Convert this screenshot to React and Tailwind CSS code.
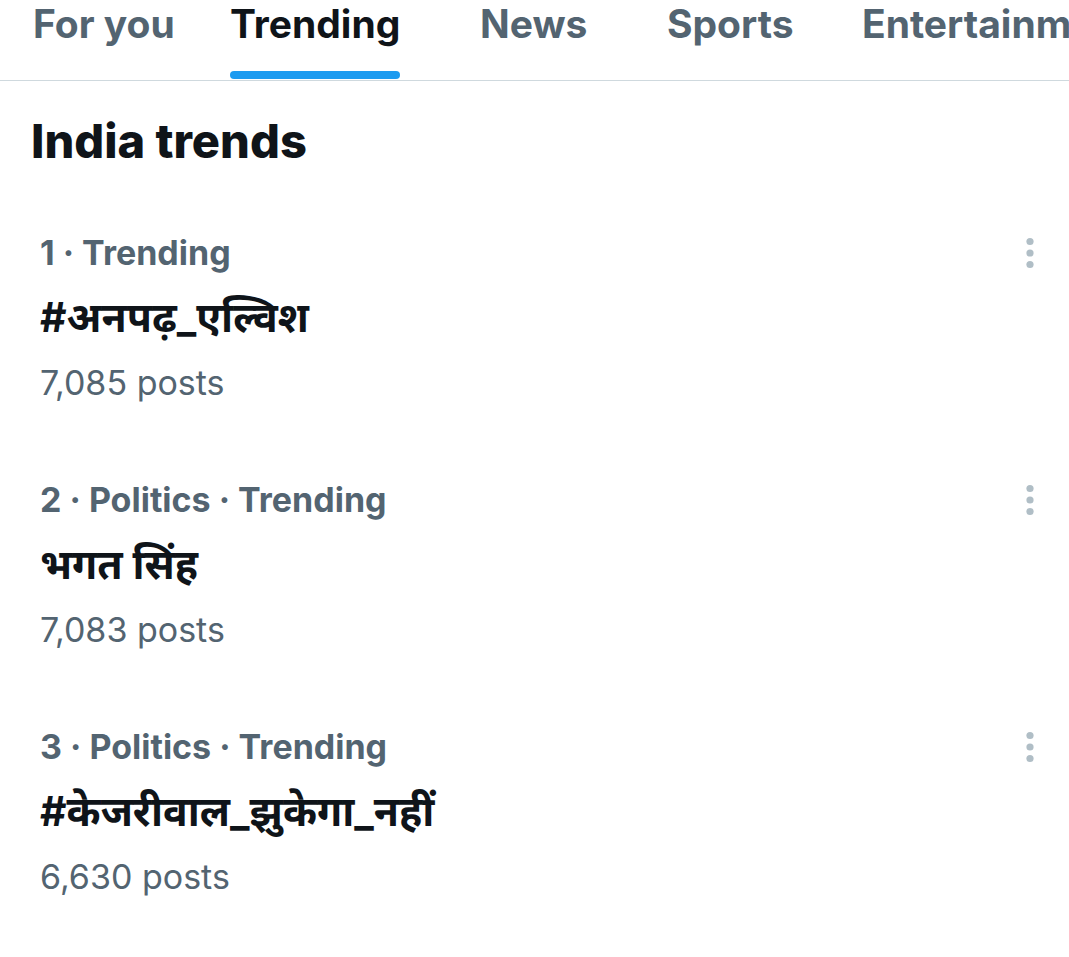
import React from 'react'

const tabs = [
  { label: 'For you', w: 'w-[197px]' },
  { label: 'Trending', w: 'w-[250px]', active: true },
  { label: 'News', w: 'w-[187px]' },
  { label: 'Sports', w: 'w-[195px]' },
  { label: 'Entertainment', w: 'w-[260px]' },
]

const trends = [
  { meta: '1 · Trending', title: '#अनपढ़_एल्विश', posts: '7,085 posts' },
  { meta: '2 · Politics · Trending', title: 'भगत सिंह', posts: '7,083 posts' },
  { meta: '3 · Politics · Trending', title: '#केजरीवाल_झुकेगा_नहीं', posts: '6,630 posts' },
]

const MoreDots = () => (
  <svg width="10" height="32" viewBox="0 0 10 32" className="text-[#b0bec6]">
    <circle cx="5" cy="4.5" r="3.6" fill="currentColor" />
    <circle cx="5" cy="16" r="3.6" fill="currentColor" />
    <circle cx="5" cy="27.5" r="3.6" fill="currentColor" />
  </svg>
)

const App = () => {
  return (
    <div
      className="w-[1069px] h-[957px] bg-white overflow-hidden"
      style={{ fontFamily: 'Inter, "Noto Sans", "Noto Sans Devanagari", sans-serif' }}
    >
      {/* Tabs */}
      <div className="flex h-[81px] border-b border-[#cfd9de] pl-[33px] whitespace-nowrap">
        {tabs.map((t) => (
          <div key={t.label} className={`${t.w} shrink-0 flex flex-col justify-between`}>
            <span
              className={`text-[39px] leading-[48px] font-bold ${
                t.active ? 'text-[#0f1419]' : 'text-[#536471]'
              }`}
            >
              {t.label}
            </span>
            {t.active ? (
              <div className="w-[170px] h-[8px] rounded-full bg-[#1d9bf0] mb-[1px]" />
            ) : (
              <div />
            )}
          </div>
        ))}
      </div>

      {/* Heading */}
      <div className="pl-[31px] pt-[30px] text-[47px] leading-[60px] font-extrabold text-[#0f1419]">
        India trends
      </div>

      {/* Trend list */}
      <div className="mt-[62px] flex flex-col gap-[77px]">
        {trends.map((t) => (
          <div key={t.meta} className="flex justify-between pl-[40px] pr-[34px]">
            <div className="flex flex-col">
              <span className="text-[34px] leading-[40px] font-bold text-[#536471]">{t.meta}</span>
              <span className="mt-[20px] text-[41px] leading-[48px] font-bold text-[#0f1419]">
                {t.title}
              </span>
              <span className="mt-[22px] text-[34px] leading-[40px] text-[#536471]">{t.posts}</span>
            </div>
            <div className="pt-[4px]">
              <MoreDots />
            </div>
          </div>
        ))}
      </div>
    </div>
  )
}

export default App
